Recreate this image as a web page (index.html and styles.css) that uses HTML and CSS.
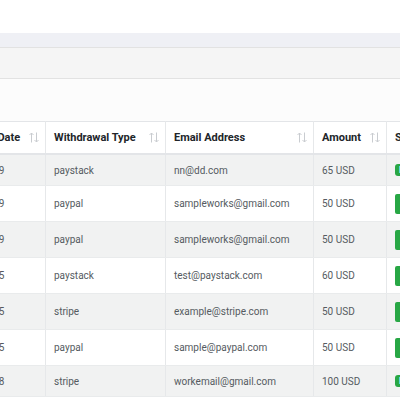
FILE: index.html
```html
<!DOCTYPE html>
<html>
<head>
<meta charset="utf-8">
<link rel="stylesheet" href="styles.css">
</head>
<body>
<div class="page">
  <div class="topspace"></div>
  <div class="band-light"></div>
  <div class="band-toolbar"></div>
  <div class="band-filter"></div>
  <div class="table-wrap">
    <table class="grid">
      <colgroup>
        <col class="c-date"><col class="c-type"><col class="c-email"><col class="c-amount"><col class="c-status">
      </colgroup>
      <thead>
        <tr>
          <th><span class="th-label">Request Date</span><svg class="sort" viewBox="0 0 10 11" width="10" height="11"><path d="M2.5 10.5V1M0.5 3L2.5 1L4.5 3M7.5 0.5V10M5.5 8L7.5 10L9.5 8" fill="none" stroke="#c9ccd0" stroke-width="1"/></svg></th>
          <th><span class="th-label">Withdrawal Type</span><svg class="sort" viewBox="0 0 10 11" width="10" height="11"><path d="M2.5 10.5V1M0.5 3L2.5 1L4.5 3M7.5 0.5V10M5.5 8L7.5 10L9.5 8" fill="none" stroke="#c9ccd0" stroke-width="1"/></svg></th>
          <th><span class="th-label">Email Address</span><svg class="sort" viewBox="0 0 10 11" width="10" height="11"><path d="M2.5 10.5V1M0.5 3L2.5 1L4.5 3M7.5 0.5V10M5.5 8L7.5 10L9.5 8" fill="none" stroke="#c9ccd0" stroke-width="1"/></svg></th>
          <th><span class="th-label">Amount</span><svg class="sort" viewBox="0 0 10 11" width="10" height="11"><path d="M2.5 10.5V1M0.5 3L2.5 1L4.5 3M7.5 0.5V10M5.5 8L7.5 10L9.5 8" fill="none" stroke="#c9ccd0" stroke-width="1"/></svg></th>
          <th><span class="th-label">Status</span></th>
        </tr>
      </thead>
      <tbody>
        <tr class="odd short"><td>2021-03-19</td><td>paystack</td><td>nn@dd.com</td><td>65 USD</td><td><span class="badge">Paid</span></td></tr>
        <tr><td>2021-03-19</td><td>paypal</td><td>sampleworks@gmail.com</td><td>50 USD</td><td><span class="btn">Pay</span></td></tr>
        <tr class="odd"><td>2021-03-19</td><td>paypal</td><td>sampleworks@gmail.com</td><td>50 USD</td><td><span class="btn">Pay</span></td></tr>
        <tr><td>2021-03-15</td><td>paystack</td><td>test@paystack.com</td><td>60 USD</td><td><span class="btn">Pay</span></td></tr>
        <tr class="odd"><td>2021-03-15</td><td>stripe</td><td>example@stripe.com</td><td>50 USD</td><td><span class="btn">Pay</span></td></tr>
        <tr><td>2021-03-15</td><td>paypal</td><td>sample@paypal.com</td><td>50 USD</td><td><span class="btn">Pay</span></td></tr>
        <tr class="odd short"><td>2021-03-08</td><td>stripe</td><td>workemail@gmail.com</td><td>100 USD</td><td><span class="badge">Paid</span></td></tr>
      </tbody>
    </table>
  </div>
</div>
</body>
</html>
```
FILE: styles.css
```css
html, body {
  margin: 0;
  padding: 0;
  background: #ffffff;
}
body {
  font-family: "Roboto", "Open Sans", sans-serif;
  font-size: 11px;
  color: #555b61;
  overflow: hidden;
  width: 400px;
  height: 400px;
}
.page {
  width: 400px;
  overflow: hidden;
}
.topspace {
  height: 33px;
  background: #ffffff;
}
.band-light {
  height: 14px;
  background: #eff0f5;
}
.band-toolbar {
  height: 30px;
  background: #f5f5f5;
  border-top: 1px solid #e2e2e2;
  border-bottom: 1px solid #e2e2e2;
}
.band-filter {
  height: 42px;
  background: #fcfcfc;
}
.table-wrap {
  width: 400px;
  overflow: hidden;
}
.grid {
  border-collapse: collapse;
  table-layout: fixed;
  width: 515px;
  margin-left: -55px;
  border-top: 1px solid #e3e5e8;
}
.c-date { width: 100px; }
.c-type { width: 120px; }
.c-email { width: 148px; }
.c-amount { width: 73px; }
.c-status { width: 74px; }
.grid th, .grid td {
  border-left: 1px solid #e6e8ea;
  border-right: 1px solid #e6e8ea;
  padding: 0 8px;
  text-align: left;
  white-space: nowrap;
  overflow: hidden;
}
.grid th {
  position: relative;
  height: 31px;
  color: #212529;
  font-weight: 700;
  border-bottom: 2px solid #e3e5e8;
  background: #ffffff;
}
.grid th .th-label {
  display: inline-block;
}
.sort {
  position: absolute;
  right: 6px;
  top: 10px;
}
.grid td {
  height: 35px;
  font-size: 10px;
  border-bottom: 1px solid #e9ebec;
  background: #ffffff;
}
.grid tr.short td {
  height: 30px;
}
.grid tr.odd td {
  background: #f1f2f2;
}
.badge {
  display: inline-block;
  vertical-align: middle;
  background: #28a745;
  color: #fff;
  font-size: 9px;
  font-weight: 700;
  line-height: 12px;
  padding: 0 4px;
  border-radius: 3px;
}
.btn {
  display: inline-block;
  vertical-align: middle;
  background: #28a745;
  color: #fff;
  font-size: 11px;
  line-height: 20px;
  padding: 0 8px;
  border-radius: 2px;
}
```
